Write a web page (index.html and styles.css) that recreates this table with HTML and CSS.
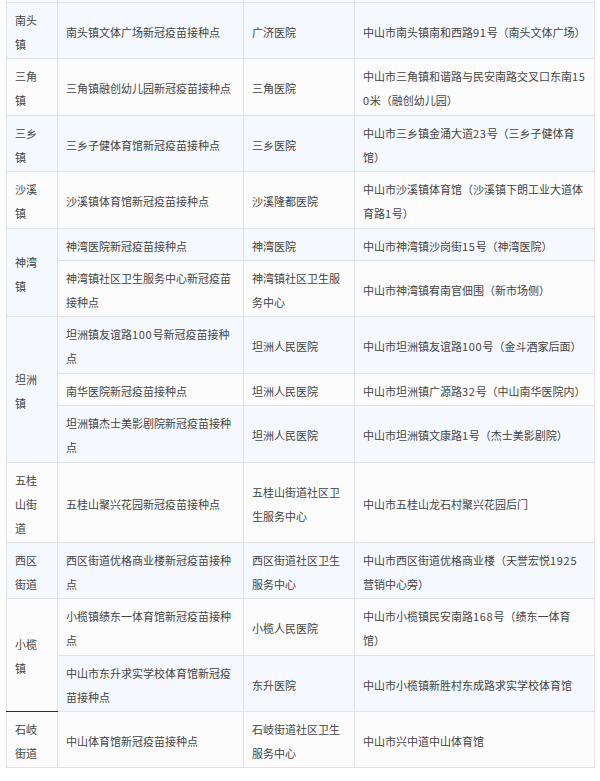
FILE: index.html
```html
<!DOCTYPE html>
<html lang="zh-CN">
<head>
<meta charset="utf-8">
<title>中山市新冠疫苗接种点</title>
<link rel="stylesheet" href="styles.css">
</head>
<body>
<div class="page">
<table class="sites">
  <colgroup>
    <col class="c-town">
    <col class="c-site">
    <col class="c-org">
    <col class="c-addr">
  </colgroup>
  <tbody>
    <tr class="cut"><td></td><td></td><td></td><td></td></tr>
    <tr><td class="town">南头镇</td><td>南头镇文体广场新冠疫苗接种点</td><td>广济医院</td><td class="addr">中山市南头镇南和西路<span class="num">91</span>号（南头文体广场）</td></tr>
    <tr><td class="town">三角镇</td><td>三角镇融创幼儿园新冠疫苗接种点</td><td>三角医院</td><td class="addr brk">中山市三角镇和谐路与民安南路交叉口东南<span class="num">150</span>米（融创幼儿园）</td></tr>
    <tr><td class="town">三乡镇</td><td>三乡子健体育馆新冠疫苗接种点</td><td>三乡医院</td><td class="addr">中山市三乡镇金涌大道<span class="num">23</span>号（三乡子健体育馆）</td></tr>
    <tr><td class="town">沙溪镇</td><td>沙溪镇体育馆新冠疫苗接种点</td><td>沙溪隆都医院</td><td class="addr">中山市沙溪镇体育馆（沙溪镇下朗工业大道体育路<span class="num">1</span>号）</td></tr>
    <tr><td class="town" rowspan="2">神湾镇</td><td>神湾医院新冠疫苗接种点</td><td>神湾医院</td><td class="addr">中山市神湾镇沙岗街<span class="num">15</span>号（神湾医院）</td></tr>
    <tr><td>神湾镇社区卫生服务中心新冠疫苗接种点</td><td>神湾镇社区卫生服务中心</td><td class="addr">中山市神湾镇宥南官佃围（新市场侧）</td></tr>
    <tr><td class="town" rowspan="3">坦洲镇</td><td>坦洲镇友谊路<span class="num">100</span>号新冠疫苗接种点</td><td>坦洲人民医院</td><td class="addr">中山市坦洲镇友谊路<span class="num">100</span>号（金斗酒家后面）</td></tr>
    <tr><td>南华医院新冠疫苗接种点</td><td>坦洲人民医院</td><td class="addr">中山市坦洲镇广源路<span class="num">32</span>号（中山南华医院内）</td></tr>
    <tr><td>坦洲镇杰士美影剧院新冠疫苗接种点</td><td>坦洲人民医院</td><td class="addr">中山市坦洲镇文康路<span class="num">1</span>号（杰士美影剧院）</td></tr>
    <tr><td class="town">五桂山街道</td><td>五桂山聚兴花园新冠疫苗接种点</td><td>五桂山街道社区卫生服务中心</td><td class="addr">中山市五桂山龙石村聚兴花园后门</td></tr>
    <tr><td class="town">西区街道</td><td>西区街道优格商业楼新冠疫苗接种点</td><td>西区街道社区卫生服务中心</td><td class="addr">中山市西区街道优格商业楼（天誉宏悦<span class="num">1925</span>营销中心旁）</td></tr>
    <tr><td class="town mark" rowspan="2">小榄镇</td><td>小榄镇绩东一体育馆新冠疫苗接种点</td><td>小榄人民医院</td><td class="addr">中山市小榄镇民安南路<span class="num">168</span>号（绩东一体育<wbr>馆）</td></tr>
    <tr><td>中山市东升求实学校体育馆新冠疫苗接种点</td><td>东升医院</td><td class="addr">中山市小榄镇新胜村东成路求实学校体育馆</td></tr>
    <tr><td class="town">石岐街道</td><td>中山体育馆新冠疫苗接种点</td><td>石岐街道社区卫生服务中心</td><td class="addr">中山市兴中道中山体育馆</td></tr>
  </tbody>
</table>
</div>
</body>
</html>
```
FILE: styles.css
```css
html, body {
  margin: 0;
  padding: 0;
  background: #ffffff;
}

.page {
  padding: 0 0 0 6px;
}

.sites {
  border-collapse: collapse;
  table-layout: fixed;
  width: 588px;
  font-family: "Noto Sans CJK SC", "Noto Sans", sans-serif;
  font-size: 11px;
  line-height: 24px;
  color: #444444;
}

.c-town { width: 51px; }
.c-site { width: 186px; }
.c-org  { width: 111px; }
.c-addr { width: 240px; }

.sites td {
  border: 1px solid #dfe2e6;
  padding: 5px 8px 2.4px;
  vertical-align: middle;
  text-align: left;
  background: #fcfcfd;
}

.sites td.town {
  padding-right: 14px;
}

.sites td.addr {
  padding-right: 6px;
}

.sites td.brk {
  word-break: break-all;
}

.sites tr:nth-child(even) td {
  background: #f5f8fd;
}

.sites .cut td {
  border-top: 0;
  padding: 0;
  height: 2px;
  line-height: 0;
}

.num {
  letter-spacing: 0.7px;
}

.sites td.mark {
  border-bottom: 1px solid #2a2a2a;
}
```
